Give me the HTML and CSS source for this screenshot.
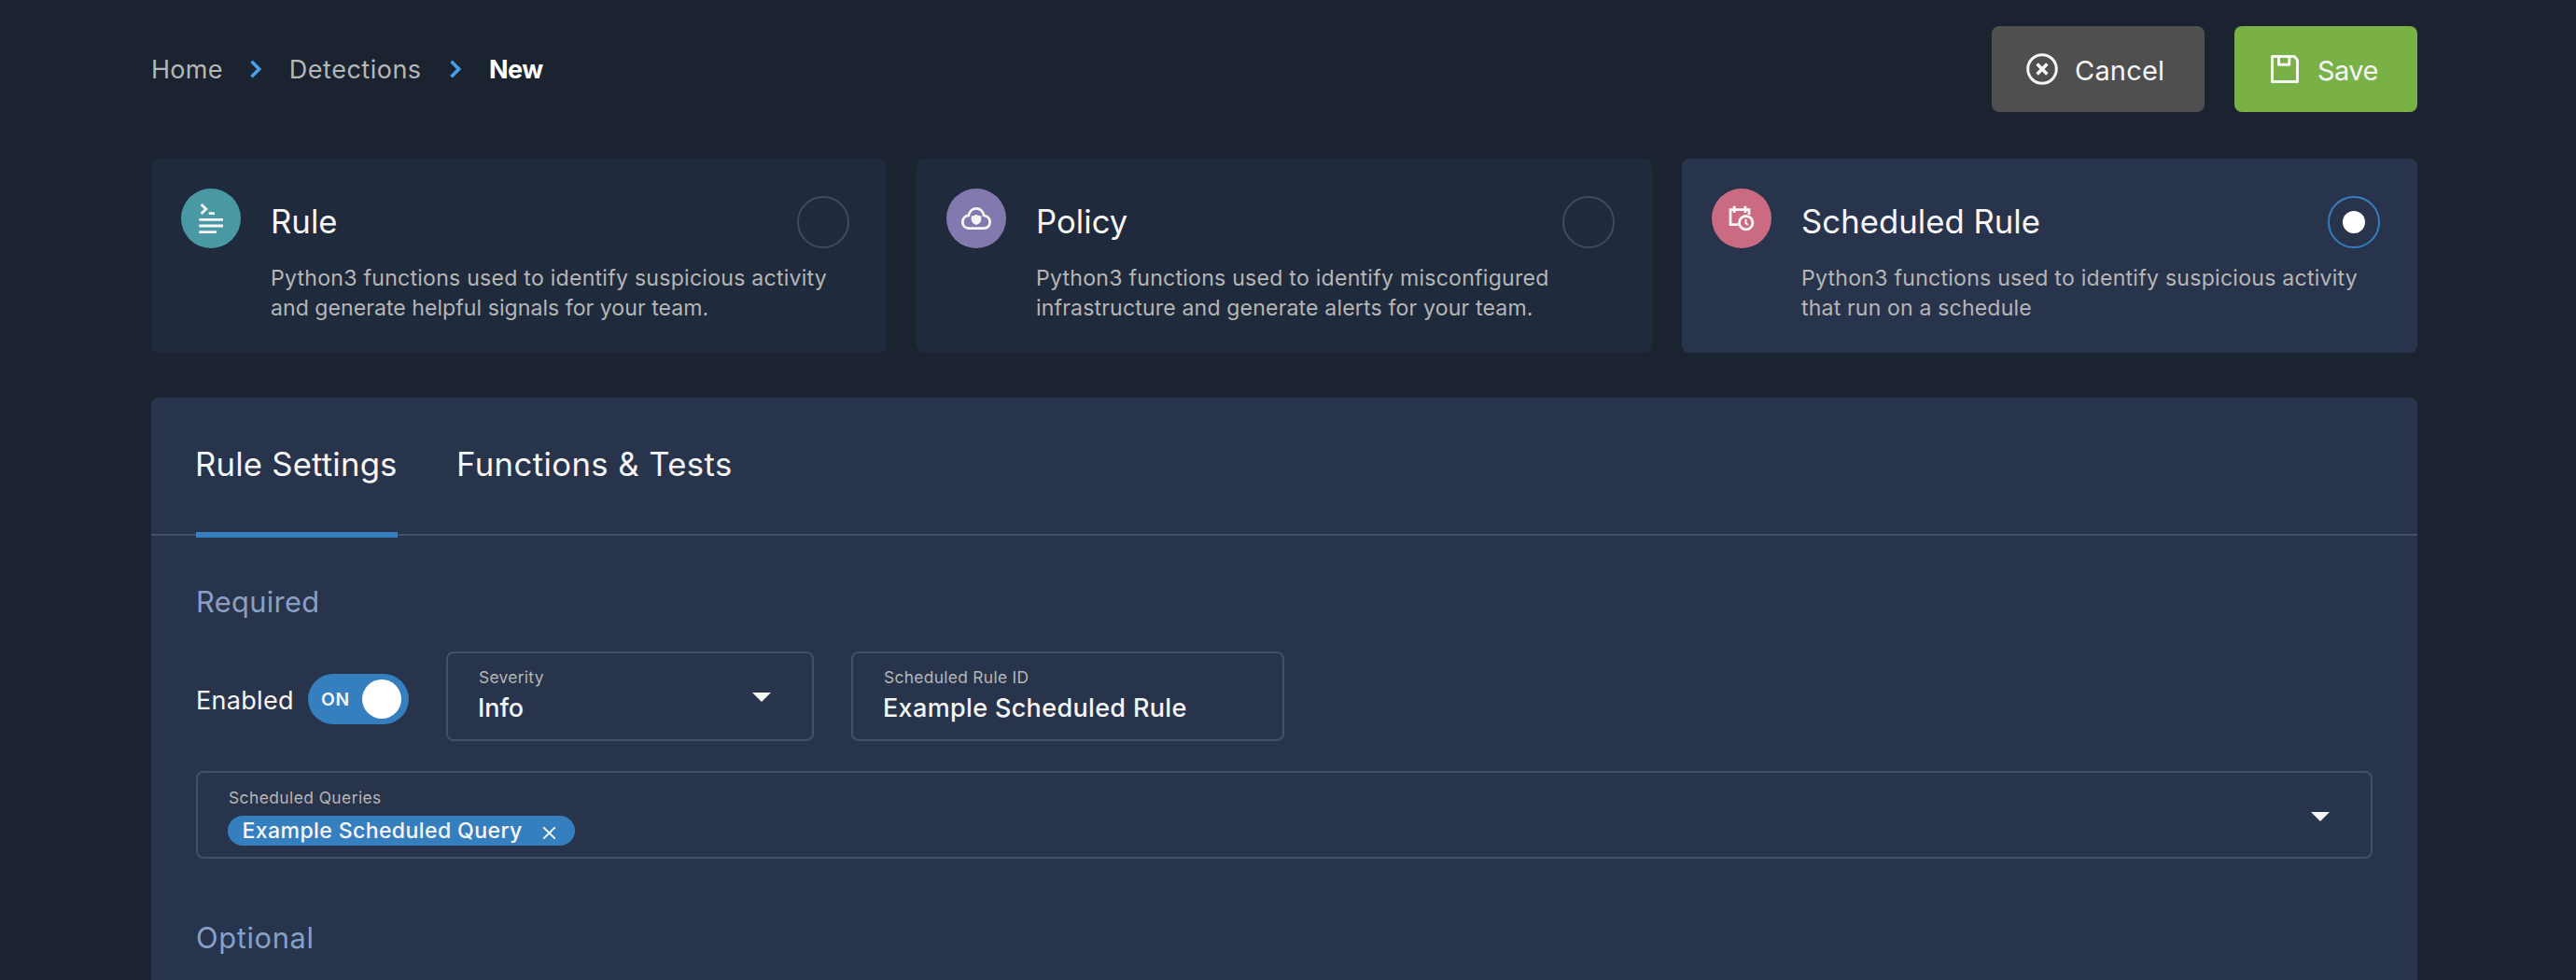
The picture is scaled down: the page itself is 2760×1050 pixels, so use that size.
FILE: index.html
```html
<!DOCTYPE html>
<html lang="en">
<head>
<meta charset="utf-8">
<title>New Detection</title>
<link rel="stylesheet" href="styles.css">
</head>
<body>
<div class="page">
  <header class="topbar">
    <nav class="breadcrumb">
      <a class="crumb crumb-home">Home</a>
      <svg class="crumb-sep" width="12" height="20" viewBox="0 0 12 20"><path d="M1.5 1.8 9.6 10 1.5 18.2"/></svg>
      <a class="crumb crumb-section">Detections</a>
      <svg class="crumb-sep" width="12" height="20" viewBox="0 0 12 20"><path d="M1.5 1.8 9.6 10 1.5 18.2"/></svg>
      <span class="crumb crumb-current">New</span>
    </nav>
    <div class="actions">
      <button class="btn btn-cancel">
        <svg width="40" height="40" viewBox="0 0 40 40"><circle cx="20" cy="20" r="15.3"/><path class="thick" d="M14.6 14.6 25.4 25.4M25.4 14.6 14.6 25.4"/></svg>
        <span>Cancel</span>
      </button>
      <button class="btn btn-save">
        <svg width="40" height="40" viewBox="0 0 40 40"><path d="M6.5 6.5H30.3L33.5 10.5V33.5H6.5Z"/><path d="M13.5 6.5V15.2H24.8V6.5"/></svg>
        <span>Save</span>
      </button>
    </div>
  </header>

  <section class="types">
    <article class="card">
      <svg class="badge badge-rule" width="64" height="64" viewBox="0 0 64 64">
        <path class="line" d="M21.6 17 26.8 22 21.6 27"/>
        <path class="solid" d="M29.7 25.3H36V28H29.7ZM19.3 32H45V34.8H19.3ZM19.3 38.6H45V41.4H19.3ZM19.3 45.2H38V48H19.3Z"/>
      </svg>
      <div class="card-body">
        <div class="card-head"><h2 class="card-title">Rule</h2><span class="radio"></span></div>
        <p class="card-text"><span class="t-wide">Python3 functions used to identify suspicious activity</span><br><span>and generate helpful signals for your team.</span></p>
      </div>
    </article>
    <article class="card">
      <svg class="badge badge-policy" width="64" height="64" viewBox="0 0 64 64">
        <path class="line" d="M24 42.6C20 42.6 17.4 39.6 17.4 36 17.4 32 20.3 29.2 23.8 28.8 24.8 24.4 28 21.4 32 21.4 36 21.4 39.2 24.4 40.2 28.8 43.9 29.2 46.6 32.2 46.6 36 46.6 39.8 44 42.6 40 42.6Z"/>
        <path class="solid" d="M32 27.7C33.5 29 35.5 29.4 37.3 29.4V33C37.3 36 35 38 32 39 29 38 26.7 36 26.7 33V29.4C28.5 29.4 30.5 29 32 27.7Z"/>
      </svg>
      <div class="card-body">
        <div class="card-head"><h2 class="card-title">Policy</h2><span class="radio"></span></div>
        <p class="card-text"><span class="t-wide">Python3 functions used to identify misconfigured</span><br><span class="t-mid">infrastructure and generate alerts for your team.</span></p>
      </div>
    </article>
    <article class="card card-selected">
      <svg class="badge badge-scheduled" width="64" height="64" viewBox="0 0 64 64">
        <path class="line" d="M28.5 38.6H20V22.7H40V28M24.2 18.7V26M35.9 18.7V26"/>
        <circle class="line" cx="36.7" cy="36.7" r="7.2"/>
        <path class="hand" d="M36.5 32.8V37L38.8 39"/>
      </svg>
      <div class="card-body">
        <div class="card-head"><h2 class="card-title">Scheduled Rule</h2><span class="radio radio-on"></span></div>
        <p class="card-text"><span class="t-wide">Python3 functions used to identify suspicious activity</span><br><span class="t-mid">that run on a schedule</span></p>
      </div>
    </article>
  </section>

  <main class="panel">
    <div class="tabs">
      <a class="tab tab-active">Rule Settings</a>
      <a class="tab tab-tests">Functions &amp; Tests</a>
    </div>
    <div class="panel-body">
      <h3 class="section">Required</h3>
      <div class="row">
        <div class="enabled">
          <span class="enabled-label">Enabled</span>
          <span class="toggle"><span class="toggle-text">ON</span><span class="knob"></span></span>
        </div>
        <div class="field field-severity">
          <div>
            <div class="label">Severity</div>
            <div class="value value-info">Info</div>
          </div>
          <svg class="caret" width="20" height="10" viewBox="0 0 20 10"><path d="M0 0H20L10 10Z"/></svg>
        </div>
        <div class="field field-id">
          <div>
            <div class="label label-id">Scheduled Rule ID</div>
            <div class="value">Example Scheduled Rule</div>
          </div>
        </div>
      </div>
      <div class="field field-queries">
        <div>
          <div class="label label-queries">Scheduled Queries</div>
          <div class="chip">
            <span>Example Scheduled Query</span>
            <svg width="15" height="13" viewBox="0 0 15 13"><path d="M1.2 .4 13.8 12.6M13.8 .4 1.2 12.6"/></svg>
          </div>
        </div>
        <svg class="caret" width="20" height="10" viewBox="0 0 20 10"><path d="M0 0H20L10 10Z"/></svg>
      </div>
      <h3 class="section section-optional">Optional</h3>
    </div>
  </main>
</div>
</body>
</html>
```
FILE: styles.css
```css
* { box-sizing: border-box; }

body {
  margin: 0;
  background: #1c2330;
  color: #f6f6f6;
  font-family: Inter, "Open Sans", sans-serif;
  font-weight: 400;
}

h2, h3, p { margin: 0; font-weight: inherit; }
svg { display: block; flex: none; }

.page {
  height: 1050px;
  padding: 28px 170px 0 162px;
  overflow: hidden;
  display: flex;
  flex-direction: column;
}

/* top bar */
.topbar {
  display: flex;
  justify-content: space-between;
  align-items: center;
  height: 92px;
  flex: none;
}
.breadcrumb { display: flex; align-items: center; gap: 29.5px; }
.crumb { padding-top: 2px; font-size: 27px; line-height: 36px; color: #b6b6b6; }
.crumb-home { letter-spacing: .3px; }
.crumb-section { letter-spacing: .5px; margin-right: 1px; }
.crumb-current { color: #fff; font-weight: 700; letter-spacing: -.6px; margin-left: .5px; }
.crumb-sep path { fill: none; stroke: #479fe8; stroke-width: 3.6; }

.actions { display: flex; gap: 32px; }
.btn {
  display: flex;
  align-items: center;
  gap: 15px;
  height: 92px;
  padding: 0 0 0 34px;
  border: 0;
  border-radius: 8px;
  color: #f6f6f6;
  font: 400 29px/36px Inter, "Open Sans", sans-serif;
}
.btn span { padding-top: 3px; }
.btn svg { fill: none; stroke: #f6f6f6; stroke-width: 3; stroke-linejoin: round; }
.btn .thick { stroke-width: 3.6; }
.btn-cancel { width: 228px; background: #4f4f4f; letter-spacing: .2px; }
.btn-save { width: 196px; background: #7ab147; letter-spacing: -.6px; }

/* detection type cards */
.types {
  display: grid;
  grid-template-columns: repeat(3, 1fr);
  gap: 32px;
  margin-top: 50px;
  flex: none;
}
.card {
  display: flex;
  gap: 32px;
  height: 208px;
  padding: 32px 40px 0 32px;
  border-radius: 8px;
  background: #1f2a3c;
}
.card-selected { background: #28344c; }
.badge { border-radius: 50%; }
.badge-rule { background: #4999a5; }
.badge-policy { background: #8379ae; }
.badge-scheduled { background: #cb6b81; }
.badge .line { fill: none; stroke: #f6f6f6; stroke-width: 2.8; }
.badge .hand { fill: none; stroke: #f6f6f6; stroke-width: 2; }
.badge .solid { fill: #f6f6f6; }
.card-body { flex: 1; padding-top: 8px; }
.card-head { display: flex; justify-content: space-between; height: 56px; }
.card-title { font-size: 34.7px; line-height: 55px; letter-spacing: .03px; }
.radio {
  display: flex;
  align-items: center;
  justify-content: center;
  width: 56px;
  height: 56px;
  border: 2px solid #3e4b65;
  border-radius: 50%;
}
.radio-on { border-color: #367fbf; }
.radio-on::after { content: ""; width: 24px; height: 24px; border-radius: 50%; background: #fff; }
.card-text {
  margin-top: 16px;
  color: #b6b6b6;
  font-size: 23.1px;
  line-height: 32px;
  letter-spacing: .03px;
  white-space: nowrap;
}
.t-wide { letter-spacing: .24px; }
.t-mid { letter-spacing: .15px; }

/* settings panel */
.panel {
  flex: 1;
  margin-top: 48px;
  border-radius: 8px 8px 0 0;
  background: #28344c;
}
.tabs {
  display: flex;
  gap: 64px;
  height: 148px;
  padding-left: 48px;
  border-bottom: 2px solid #444f69;
}
.tab {
  position: relative;
  font-size: 34.7px;
  line-height: 143px;
  white-space: nowrap;
  text-indent: -1px;
}
.tab-active { width: 216px; letter-spacing: .2px; }
.tab-active::after {
  content: "";
  position: absolute;
  left: 0;
  right: 0;
  bottom: -4px;
  height: 6px;
  background: #367fbf;
}
.tab-tests { letter-spacing: .4px; }

.panel-body { padding: 48px 48px 0; }
.section {
  color: #89a0c4;
  font-size: 30.8px;
  line-height: 46px;
  letter-spacing: .35px;
}
.section-optional { margin-top: 62px; letter-spacing: .65px; }

.row { display: flex; gap: 40px; margin-top: 30px; }
.enabled { display: flex; align-items: center; height: 96px; padding-top: 6px; }
.enabled-label { width: 120px; padding-top: 4px; font-size: 27px; line-height: 36px; letter-spacing: .3px; }
.toggle {
  display: flex;
  align-items: center;
  justify-content: space-between;
  width: 108px;
  height: 54px;
  padding: 0 8px 0 14px;
  border-radius: 27px;
  background: #367fbf;
}
.toggle-text { font-size: 19.3px; font-weight: 600; letter-spacing: .6px; }
.knob { width: 42px; height: 42px; border-radius: 50%; background: #fff; }

.field {
  display: flex;
  justify-content: space-between;
  align-items: flex-start;
  height: 96px;
  padding: 15px 44px 0 32px;
  border: 2px solid #444f69;
  border-radius: 8px;
}
.field-severity { width: 394px; }
.field-id { width: 464px; }
.label { color: #b6b6b6; font-size: 17.4px; line-height: 22px; letter-spacing: .3px; padding-left: 1px; }
.label-queries { letter-spacing: .43px; }
.value { margin-top: 5px; font-size: 27px; font-weight: 500; line-height: 34px; letter-spacing: .34px; }
.value-info { letter-spacing: -.1px; }
.caret { margin-top: 27px; fill: #f6f6f6; }
.field-queries { height: 94px; margin-top: 32px; padding-top: 16px; }
.field-queries .caret { margin-top: 26px; }
.chip {
  display: flex;
  align-items: center;
  justify-content: space-between;
  width: 372px;
  height: 32px;
  margin-top: 8px;
  padding: 0 20px 0 15.5px;
  border-radius: 16px;
  background: #367fbf;
  font-size: 23.1px;
  font-weight: 500;
  line-height: 32px;
  letter-spacing: .37px;
}
.chip svg { margin-top: 5px; fill: none; stroke: #f6f6f6; stroke-width: 2; }
```
